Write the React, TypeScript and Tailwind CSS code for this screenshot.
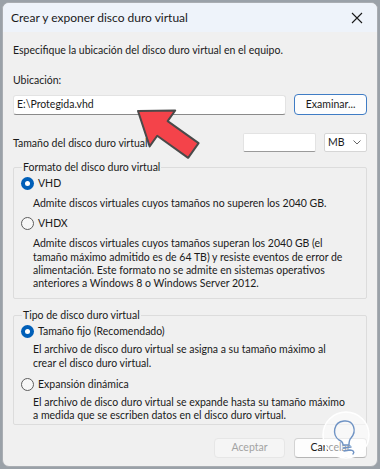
import React from 'react'

const font = { fontFamily: 'Lato, "Liberation Sans", sans-serif' }

function Radio({ checked, label }: { checked?: boolean; label: string }) {
  return (
    <div className="flex items-center h-[14px]">
      {checked ? (
        <span className="w-[13px] h-[13px] rounded-full bg-[#005fb8] flex items-center justify-center">
          <span className="w-[5px] h-[5px] rounded-full bg-white" />
        </span>
      ) : (
        <span className="w-[13px] h-[13px] rounded-full border border-[#5d5d5d] bg-[#f7f7f7]" />
      )}
      <span className="ml-[4px] text-[10.5px] leading-[14px] text-[#1a1a1a]">{label}</span>
    </div>
  )
}

function Desc({ children }: { children: React.ReactNode }) {
  return (
    <p className="pl-[12px] whitespace-nowrap text-[10.5px] leading-[13.3px] text-[#1a1a1a]">{children}</p>
  )
}

export default function App() {
  return (
    <div className="w-[380px] h-[469px] bg-[#9aa1a8] pt-[2px] px-[2px] overflow-hidden relative" style={font}>
      <div className="h-[465px] bg-[#f0f0f0] rounded-[7px] border border-[#a9adb2] overflow-hidden flex flex-col">
        {/* Title bar */}
        <div className="h-[29px] bg-[#eef3fa] flex items-center justify-between pl-[8px] pr-[12px] shrink-0">
          <span className="text-[12px] text-[#1a1a1a]">Crear y exponer disco duro virtual</span>
          <svg width="12" height="12" viewBox="0 0 12 12" className="mr-[2px]">
            <path d="M1 1 L11 11 M11 1 L1 11" stroke="#1a1a1a" strokeWidth="1.1" />
          </svg>
        </div>

        <div className="px-[10px] flex flex-col">
          <p className="mt-[11px] text-[10.5px] leading-[14px] text-[#1a1a1a]">
            Especifique la ubicación del disco duro virtual en el equipo.
          </p>
          <p className="mt-[16px] text-[10.5px] leading-[14px] text-[#1a1a1a]">Ubicación:</p>

          <div className="mt-[7px] flex items-center gap-[8px]">
            <div className="w-[274px] h-[20px] bg-white border border-[#e3e3e3] border-b-[#8a8a8a] rounded-[3px] flex items-center pl-[3px] text-[10.5px] text-[#1a1a1a]">
              E:\Protegida.vhd
            </div>
            <div className="w-[73px] h-[21px] bg-[#fdfdfd] border border-[#3f7cc4] rounded-[4px] flex items-center justify-center text-[10.5px] text-[#1a1a1a]">
              Examinar...
            </div>
          </div>

          <div className="mt-[18px] flex items-center h-[19px]">
            <span className="text-[10.5px] leading-[14px] text-[#1a1a1a] flex-1">Tamaño del disco duro virtual</span>
            <div className="w-[73px] h-[19px] bg-white border border-[#e3e3e3] border-b-[#9a9a9a] rounded-[2px]" />
            <div className="ml-[8px] w-[43px] h-[19px] bg-white border border-[#d6d6d6] rounded-[2px] flex items-center justify-between pl-[3px] pr-[5px] text-[10.5px] text-[#1a1a1a]">
              <span>MB</span>
              <svg width="8" height="5" viewBox="0 0 8 5">
                <path d="M0.5 0.5 L4 4 L7.5 0.5" stroke="#555" strokeWidth="0.9" fill="none" />
              </svg>
            </div>
          </div>

          {/* Formato */}
          <fieldset className="mt-[8px] border border-[#dcdcdc] rounded-[2px] px-[7px] pb-[8px]">
            <legend className="ml-[1px] px-[1px] text-[10.5px] leading-[14px] text-[#1a1a1a]">
              Formato del disco duro virtual
            </legend>
            <div className="mt-[2px]">
              <Radio checked label="VHD" />
            </div>
            <div className="mt-[7px]">
              <Desc>Admite discos virtuales cuyos tamaños no superen los 2040 GB.</Desc>
            </div>
            <div className="mt-[6px]">
              <Radio label="VHDX" />
            </div>
            <div className="mt-[7px]">
              <Desc>
                Admite discos virtuales cuyos tamaños superan los 2040 GB (el
                <br />
                tamaño máximo admitido es de 64 TB) y resiste eventos de error de
                <br />
                alimentación. Este formato no se admite en sistemas operativos
                <br />
                anteriores a Windows 8 o Windows Server 2012.
              </Desc>
            </div>
          </fieldset>

          {/* Tipo */}
          <fieldset className="mt-[9px] border border-[#dcdcdc] rounded-[2px] px-[7px] pb-[1px]">
            <legend className="ml-[1px] px-[1px] text-[10.5px] leading-[14px] text-[#1a1a1a]">
              Tipo de disco duro virtual
            </legend>
            <div className="mt-[2px]">
              <Radio checked label="Tamaño fijo (Recomendado)" />
            </div>
            <div className="mt-[5px]">
              <Desc>
                El archivo de disco duro virtual se asigna a su tamaño máximo al
                <br />
                crear el disco duro virtual.
              </Desc>
            </div>
            <div className="mt-[7px]">
              <Radio label="Expansión dinámica" />
            </div>
            <div className="mt-[5px]">
              <Desc>
                El archivo de disco duro virtual se expande hasta su tamaño máximo
                <br />
                a medida que se escriben datos en el disco duro virtual.
              </Desc>
            </div>
          </fieldset>

          <div className="mt-[13px] flex justify-end gap-[9px]">
            <div className="w-[71px] h-[20px] bg-[#f5f5f5] border border-[#e6e6e6] rounded-[4px] flex items-center justify-center text-[10.5px] text-[#a3a3a3]">
              Aceptar
            </div>
            <div className="w-[73px] h-[20px] bg-[#fdfdfd] border border-[#d3d3d3] border-b-[#b5b5b5] rounded-[4px] flex items-center justify-center text-[10.5px] text-[#1a1a1a]">
              Cancelar
            </div>
          </div>
        </div>
      </div>

      {/* Red arrow annotation */}
      <svg className="absolute left-0 top-0 pointer-events-none" width="380" height="469">
        <g transform="translate(138 111) rotate(35.5)">
          <polygon
            points="0,0 30,-22 30,-9 68,-9 68,9 30,9 30,22"
            fill="#f4434a"
            stroke="#4a4a4a"
            strokeWidth="2"
            strokeLinejoin="round"
          />
        </g>
      </svg>

      {/* Watermark logo */}
      <svg className="absolute left-[320px] top-[410px] pointer-events-none" width="52" height="52" viewBox="0 0 52 52">
        <circle cx="26" cy="25" r="23" fill="#ffffff" fillOpacity="0.55" stroke="#ffffff" strokeWidth="1.5" />
        <path
          d="M19 30 C12 25 13 12 24 11 C34 10 37 21 31 28 C29 30 29 33 29 35 L23 35 C23 33 22 31 19 30 Z M23 38 L31 37 M24 41 L30 40 C33 40 35 42 33 44"
          fill="none"
          stroke="#6f93c4"
          strokeWidth="1.4"
          strokeLinecap="round"
        />
      </svg>
    </div>
  )
}
